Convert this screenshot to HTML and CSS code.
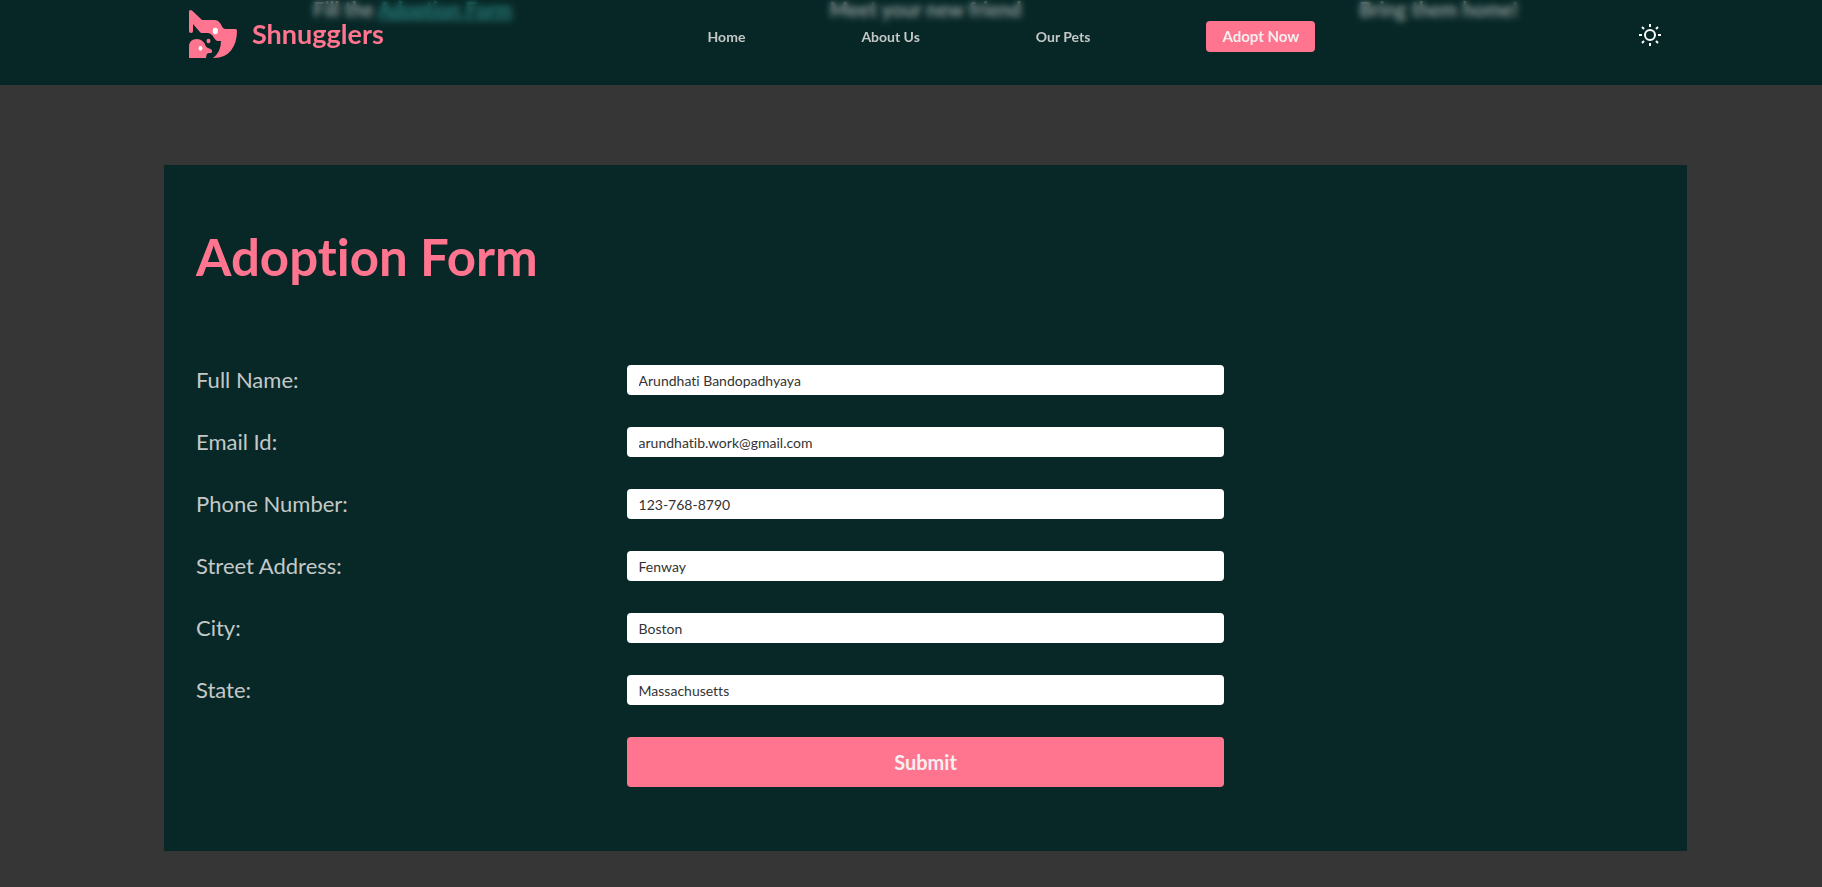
FILE: index.html
```html
<!DOCTYPE html>
<html lang="en">
<head>
<meta charset="utf-8">
<meta name="viewport" content="width=device-width, initial-scale=1">
<title>Shnugglers</title>
<link rel="stylesheet" href="styles.css">
</head>
<body>
<header class="header">
  <a class="brand" href="#">
    <svg class="brand-logo" viewBox="0 0 48 48" aria-hidden="true">
      <path fill="#ff758f" d="M0 1.500Q0 0 1.500 0Q2.500 0 3.500 1L13 10H26Q29 10 31 13L34 18Q35 19 37 19H46.500Q48 19 48 20.500Q48 33 42 40.500Q36 48 25 48H24Q32 42 32 31H29Q27 31 25.500 28.500L23.500 25.500Q21.500 23 19 23H13Q11.500 23 10.500 21.500L4 14V21Q4 23 2 23Q0 23 0 21Z"/>
      <path fill="#ff758f" d="M0 48V37Q0 29 8 29Q14 29 16.500 35.500Q17 37 19 38L21.500 39Q23 39.500 23 41V42Q23 43 21.500 43H20Q18 43 17.500 45L17 48Z"/>
      <ellipse cx="19.500" cy="31" rx="2" ry="2.300" fill="#ff758f"/>
      <ellipse cx="26.300" cy="21" rx="2.600" ry="3.200" fill="#fff"/>
      <ellipse cx="11.500" cy="38.300" rx="1.900" ry="2.400" fill="#fff"/>
    </svg>
    <span class="brand-name">Shnugglers</span>
  </a>
  <nav class="nav">
    <a class="nav-link" href="#">Home</a>
    <a class="nav-link" href="#">About Us</a>
    <a class="nav-link" href="#">Our Pets</a>
    <a class="nav-link nav-cta" href="#adoption">Adopt Now</a>
  </nav>
  <button class="theme-toggle" type="button" aria-label="Switch theme">
    <svg class="theme-icon" viewBox="0 0 22 22" fill="none" stroke="#fff" stroke-width="2" aria-hidden="true">
      <circle cx="11" cy="11" r="5"/>
      <path d="M11 0V3M11 19V22M0 11H3M19 11H22M3 3L5 5M17 17L19 19M3 19L5 17M17 5L19 3"/>
    </svg>
  </button>
</header>
<main>
  <section class="steps">
    <p class="step">Fill the <a class="step-link" href="#adoption">Adoption Form</a></p>
    <p class="step">Meet your new friend</p>
    <p class="step">Bring them home!</p>
  </section>
  <section class="card" id="adoption">
    <h1 class="title">Adoption Form</h1>
    <form class="form">
      <label class="label" for="name">Full Name:</label>
      <input class="field" id="name" type="text" value="Arundhati Bandopadhyaya">
      <label class="label" for="email">Email Id:</label>
      <input class="field" id="email" type="email" value="arundhatib.work@gmail.com">
      <label class="label" for="phone">Phone Number:</label>
      <input class="field" id="phone" type="tel" value="123-768-8790">
      <label class="label" for="street">Street Address:</label>
      <input class="field" id="street" type="text" value="Fenway">
      <label class="label" for="city">City:</label>
      <input class="field" id="city" type="text" value="Boston">
      <label class="label" for="state">State:</label>
      <input class="field" id="state" type="text" value="Massachusetts">
      <button class="submit" type="submit">Submit</button>
    </form>
  </section>
</main>
</body>
</html>
```
FILE: styles.css
```css
* { box-sizing: border-box; }
body {
  margin: 0;
  background: #363636;
  color: #c4c8c7;
  font-family: Lato, "Open Sans", sans-serif;
  font-variant-ligatures: none;
}
a { color: inherit; text-decoration: none; }
.header {
  position: fixed;
  top: 0;
  left: 0;
  right: 0;
  z-index: 1;
  display: flex;
  justify-content: space-between;
  align-items: flex-start;
  height: 85px;
  padding: 10px 161px 0 189px;
  background: rgba(8, 40, 39, 0.3);
  backdrop-filter: blur(3px);
}
.brand { display: flex; align-items: center; gap: 15px; color: #ff758f; }
.brand-logo { width: 48px; height: 48px; }
.brand-name { font-size: 27px; line-height: 48px; font-weight: 700; }
.nav { display: flex; align-items: center; gap: 116px; padding-top: 11px; }
.nav-link { font-size: 14px; line-height: 31px; font-weight: 700; }
.nav-cta { padding: 0 16px; border-radius: 4px; background: #ff758f; color: #f5f0f0; font-size: 15px; }
.theme-toggle { margin-top: 14px; padding: 0; border: 0; background: none; }
.theme-icon { display: block; width: 22px; height: 22px; }
.steps {
  display: grid;
  grid-template-columns: repeat(3, 1fr);
  gap: 16px;
  height: 85px;
  padding: 0 135px 0 164px;
  background: #082827;
}
.step { margin: 0; font-size: 20px; line-height: 18px; font-weight: 700; text-align: center; }
.step-link { color: #38a39f; text-decoration: underline; }
.card {
  margin: 80px 135px 36px 164px;
  padding: 64px 32px;
  background: #082827;
}
.title { margin: 0 0 80px; color: #ff758f; font-size: 51px; line-height: 56px; font-weight: 700; }
.form { display: grid; grid-template-columns: 2fr 3fr 2fr; gap: 32px; }
.label { grid-column: 1; font-size: 22px; line-height: 30px; }
.field {
  grid-column: 2;
  min-width: 0;
  height: 30px;
  padding: 0 12px;
  border: 0;
  border-radius: 4px;
  background: #fff;
  color: #333;
  font-family: inherit;
  font-size: 14px;
  font-variant-ligatures: none;
}
.submit {
  grid-column: 2;
  height: 50px;
  border: 0;
  border-radius: 4px;
  background: #ff758f;
  color: #f5f0f0;
  font-family: inherit;
  font-size: 20px;
  font-weight: 700;
}
```
